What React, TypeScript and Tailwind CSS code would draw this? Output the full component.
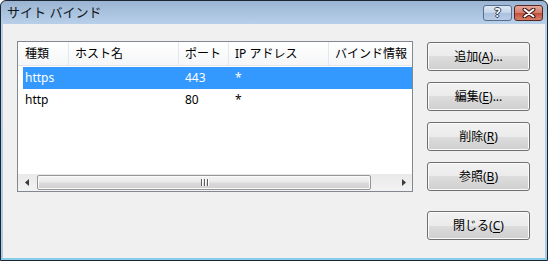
import React from "react";

interface Binding {
    type: string;
    host: string;
    port: string;
    ip: string;
    info: string;
}

const bindings: Binding[] = [
    { type: "https", host: "", port: "443", ip: "*", info: "" },
    { type: "http", host: "", port: "80", ip: "*", info: "" },
];

const DialogButton = ({ label, accel, dots }: { label: string; accel: string; dots?: boolean }) => {
    return (
        <button className="flex h-[29px] w-[103px] items-center justify-center rounded-[3px] border border-[#707070] bg-[linear-gradient(to_bottom,#f2f2f2_0%,#ebebeb_50%,#dddddd_50%,#cfcfcf_100%)] text-[12px] leading-none text-black shadow-[inset_0_0_0_1px_#fbfbfb]">
            {label}(<span className="underline underline-offset-2">{accel}</span>){dots && "..."}
        </button>
    );
};

const Arrow = ({ dir }: { dir: "left" | "right" }) => (
    <div className="flex w-[17px] items-center justify-center">
        <svg width="4" height="7" viewBox="0 0 4 7">
            {dir === "left" ? <polygon points="4,0 0,3.5 4,7" fill="#3c3c3c" /> : <polygon points="0,0 4,3.5 0,7" fill="#3c3c3c" />}
        </svg>
    </div>
);

const App = () => {
    return (
        <div className="flex h-[261px] w-[548px] flex-col overflow-hidden rounded-t-[6px] border border-[#1b2633] bg-[linear-gradient(to_bottom,#9bb4d2_0px,#b9d1ea_24px,#aecbe6_100%)] font-['Noto_Sans','Noto_Sans_CJK_JP',sans-serif] text-black">
            {/* title bar */}
            <div className="flex h-[23px] items-start justify-between">
                <span className="pl-[6px] pt-[3px] text-[13px] leading-[16px] text-[#101820]">サイト バインド</span>
                <div className="flex gap-[2px] pr-[4px] pt-[4px]">
                    <div className="flex h-[16px] w-[29px] items-center justify-center rounded-[3px] border border-[#566d8c] bg-[linear-gradient(to_bottom,#dfe8f3_0%,#c3d4e9_50%,#a9c0dd_51%,#b8cde6_100%)]">
                        <span className="text-[12px] font-bold leading-none text-white [text-shadow:1px_0_0_#2f3f55,-1px_0_0_#2f3f55,0_1px_0_#2f3f55,0_-1px_0_#2f3f55]">?</span>
                    </div>
                    <div className="flex h-[16px] w-[29px] items-center justify-center rounded-[3px] border border-[#5a2720] bg-[linear-gradient(to_bottom,#e4a89c_0%,#d47a6a_50%,#c24e3c_51%,#d3806c_100%)]">
                        <svg width="14" height="10" viewBox="0 0 14 10">
                            <path d="M2.5 1.5 L11.5 8.5 M11.5 1.5 L2.5 8.5" stroke="#3a1510" strokeWidth="4" strokeLinecap="round" />
                            <path d="M2.5 1.5 L11.5 8.5 M11.5 1.5 L2.5 8.5" stroke="#ffffff" strokeWidth="2" strokeLinecap="round" />
                        </svg>
                    </div>
                </div>
            </div>

            {/* client area */}
            <div className="flex flex-1 flex-col px-[2px]">
                <div className="flex flex-1 bg-[#f0f0f0] pl-[14px] pt-[17px] text-[12px]">
                    {/* list view */}
                    <div className="flex h-[151px] w-[396px] flex-col overflow-hidden border border-[#828790] bg-white">
                        <div className="flex h-[24px] shrink-0 border-b border-[#e5e5e5] bg-[linear-gradient(to_bottom,#ffffff,#f5f6f7)] leading-[23px]">
                            <div className="w-[51px] shrink-0 border-r border-[#e3e8ee] pl-[7px]">種類</div>
                            <div className="w-[110px] shrink-0 border-r border-[#e3e8ee] pl-[6px]">ホスト名</div>
                            <div className="w-[50px] shrink-0 border-r border-[#e3e8ee] pl-[6px]">ポート</div>
                            <div className="w-[100px] shrink-0 border-r border-[#e3e8ee] pl-[6px]">IP アドレス</div>
                            <div className="w-[100px] shrink-0 whitespace-nowrap border-r border-[#e3e8ee] pl-[6px]">バインド情報</div>
                        </div>
                        <div className="flex flex-1 flex-col pl-[5px] pt-[1px]">
                            {bindings.map((item, i) => (
                                <div
                                    key={item.type}
                                    className={`flex h-[22px] items-center ${i === 0 ? "bg-[#3399ff] text-white" : "text-black"}`}
                                >
                                    <div className="w-[156px] shrink-0 pl-[2px]">{item.type}</div>
                                    <div className="w-[50px] shrink-0 pl-[6px]">{item.port}</div>
                                    <div className="w-[100px] shrink-0 pl-[6px]">{item.ip}</div>
                                </div>
                            ))}
                        </div>
                        {/* horizontal scrollbar */}
                        <div className="flex h-[17px] shrink-0 bg-[linear-gradient(to_bottom,#e9e9e9,#f3f3f3)]">
                            <Arrow dir="left" />
                            <div className="ml-[2px] flex w-[334px] items-center justify-center rounded-[2px] border border-[#959595] bg-[linear-gradient(to_bottom,#f4f4f4_0%,#e9e9e9_48%,#dadada_52%,#d0d0d0_100%)] shadow-[inset_0_0_0_1px_#fafafa] my-[1px]">
                                <div className="flex h-[7px] gap-[2px]">
                                    <div className="w-[1px] bg-[#5e5e5e] shadow-[1px_0_0_#ffffff]" />
                                    <div className="w-[1px] bg-[#5e5e5e] shadow-[1px_0_0_#ffffff]" />
                                    <div className="w-[1px] bg-[#5e5e5e] shadow-[1px_0_0_#ffffff]" />
                                </div>
                            </div>
                            <div className="flex-1" />
                            <Arrow dir="right" />
                        </div>
                    </div>

                    {/* buttons */}
                    <div className="ml-[14px] flex flex-col pt-[1px]">
                        <div className="flex flex-col gap-[11px]">
                            <DialogButton label="追加" accel="A" dots />
                            <DialogButton label="編集" accel="E" dots />
                            <DialogButton label="削除" accel="R" />
                            <DialogButton label="参照" accel="B" />
                        </div>
                        <div className="mt-[20px]">
                            <DialogButton label="閉じる" accel="C" />
                        </div>
                    </div>
                </div>
                <div className="-mx-[2px] h-[2px] bg-[#86cdea]" />
            </div>
        </div>
    );
};

export default App;
